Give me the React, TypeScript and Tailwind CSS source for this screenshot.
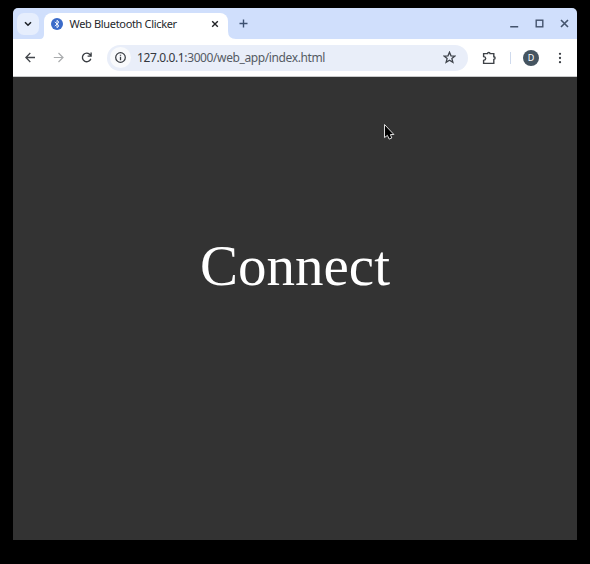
import React from "react";

function TabStrip() {
  return (
    <div className="flex h-[31px] items-start bg-[#d0dffc]">
      <button className="ml-[4px] mt-[5px] flex h-[22px] w-[22px] items-center justify-center rounded-[7px] bg-[#e6eefd]">
        <svg width="8" height="6" viewBox="0 0 8 6" fill="none" stroke="#1f2329" strokeWidth="1.6">
          <path d="M1 1.2 4 4.2 7 1.2" />
        </svg>
      </button>
      <svg className="ml-px mt-[23px] shrink-0" width="4" height="8" viewBox="0 0 4 8" fill="#fff">
        <path d="M0 8Q4 8 4 3V8Z" />
      </svg>
      <div className="mt-[5px] flex h-[26px] w-[184px] items-center rounded-t-[8px] bg-white pb-[5px] pl-[7px] pr-[9px]">
        <svg className="shrink-0" width="12" height="12" viewBox="0 0 12 12" fill="none">
          <circle cx="6" cy="6" r="6" fill="#3b6bc9" />
          <path d="M3.8 3.9 8 7.8 6 9.7V2.3L8 4.2 3.8 8.1" stroke="#fff" strokeWidth="0.9" />
        </svg>
        <span className="ml-[6.5px] whitespace-nowrap text-[11px] leading-[20px] tracking-[-0.33px] text-[#25282c]">
          Web Bluetooth Clicker
        </span>
        <svg className="ml-auto shrink-0" width="8" height="8" viewBox="0 0 8 8" stroke="#202226" strokeWidth="1.4">
          <path d="M1.2 1.2 6.8 6.8M6.8 1.2 1.2 6.8" />
        </svg>
      </div>
      <svg className="mt-[23px] shrink-0" width="8" height="8" viewBox="0 0 8 8" fill="#fff">
        <path d="M0 0Q0 8 8 8H0Z" />
      </svg>
      <svg className="ml-[3px] mt-[11px] shrink-0" width="9" height="9" viewBox="0 0 9 9" stroke="#3c5070" strokeWidth="1.4">
        <path d="M4.5 .5V8.5M.5 4.5H8.5" />
      </svg>
      <div className="ml-auto mr-[8px] mt-[11px] flex h-[9px] items-center gap-[16px]">
        <svg width="9" height="9" viewBox="0 0 9 9" stroke="#43536c" strokeWidth="1.5">
          <path d="M.2 7.8H8.2" />
        </svg>
        <svg width="9" height="9" viewBox="0 0 9 9" fill="none" stroke="#43536c" strokeWidth="1.4">
          <rect x="1.2" y="1.2" width="6.6" height="6.6" />
        </svg>
        <svg width="9" height="9" viewBox="0 0 9 9" stroke="#43536c" strokeWidth="1.6">
          <path d="M1 1 8 8M8 1 1 8" />
        </svg>
      </div>
    </div>
  );
}

function Toolbar() {
  return (
    <div className="flex h-[38px] items-center border-b border-[#c9cacb] bg-white pl-[12px]">
      <svg className="shrink-0" width="11" height="11" viewBox="0 0 11 11" fill="none" stroke="#42464b" strokeWidth="1.3">
        <path d="M10 5.5H1.2M5.3 1 .8 5.5 5.3 10" />
      </svg>
      <svg className="ml-[17px] shrink-0" width="11" height="11" viewBox="0 0 11 11" fill="none" stroke="#aaacae" strokeWidth="1.2">
        <path d="M.8 5.5H9.8M5.5 1 10 5.5 5.5 10" />
      </svg>
      <svg className="ml-[17px] shrink-0" width="11" height="11" viewBox="0 0 11 11" fill="none" stroke="#3a3e43" strokeWidth="1.35">
        <path d="M9.8 6.8A4.3 4.3 0 1 1 9.2 2.9L10.1 4M10.1 .5V4.1H6.6" />
      </svg>
      <div className="ml-[15px] flex h-[26px] w-[361px] items-center rounded-full bg-[#e9eef9] pl-[3px] pr-[12px]">
        <div className="flex h-[21px] w-[21px] shrink-0 items-center justify-center rounded-full bg-[#f9fafc]">
          <svg width="11" height="11" viewBox="0 0 11 11" fill="none" stroke="#393d42" strokeWidth="1.25">
            <circle cx="5.5" cy="5.5" r="4.8" />
            <path d="M5.5 4.8V8.2M5.5 2.7V3.8" strokeWidth="1.3" />
          </svg>
        </div>
        <span className="ml-[6px] whitespace-nowrap text-[12px] leading-[20px] tracking-[-0.39px] text-[#555b64]">
          <span className="text-[#34383e]">127.0.0.1</span>:3000/web_app/index.html
        </span>
        <svg className="ml-auto shrink-0" width="13" height="13" viewBox="0 0 13 13" fill="none" stroke="#3f444c" strokeWidth="1.3">
          <path d="M6.5 1.2 8 4.8 11.9 5.1 8.9 7.6 9.9 11.4 6.5 9.3 3.1 11.4 4.1 7.6 1.1 5.1 5 4.8Z" />
        </svg>
      </div>
      <svg className="ml-[14px] shrink-0" width="14" height="14" viewBox="0 0 14 14" fill="none" stroke="#3e4247" strokeWidth="1.4">
        <path d="M1.6 2.6H5.6A1.2 1.2 0 0 1 8 2.6H11.8V5.8A1.2 1.2 0 0 1 11.8 8.4V12.4H1.6V9.4C4.4 9 4.4 5.9 1.6 5.6Z" />
      </svg>
      <div className="ml-[14px] h-[12px] w-px bg-[#cfdaed]" />
      <div className="ml-[12px] flex h-[16px] w-[16px] items-center justify-center rounded-full bg-[#455460] text-[9px] leading-none text-white">
        D
      </div>
      <svg className="ml-[19px] shrink-0" width="4" height="12" viewBox="0 0 4 12" fill="#3e4247">
        <circle cx="2" cy="1.8" r="1.15" />
        <circle cx="2" cy="6" r="1.15" />
        <circle cx="2" cy="10.2" r="1.15" />
      </svg>
    </div>
  );
}

export default function App() {
  return (
    <div className="h-[564px] w-[590px] overflow-hidden bg-black pl-[13px] pt-[8px] font-['Noto_Sans',sans-serif]">
      <div className="relative flex h-[532px] w-[564px] flex-col overflow-hidden rounded-t-[5px] bg-[#333333]">
        <TabStrip />
        <Toolbar />
        <main className="flex justify-center pt-[156px] font-['Liberation_Serif',serif] text-[57px] leading-[65px] text-white">
          Connect
        </main>
        <svg className="absolute left-[370px] top-[115px]" width="12" height="18" viewBox="0 0 12 18">
          <path
            d="M1.5 1.5V14.6L4.4 12.4 6.2 16.1 8.8 15 7.4 11.5H10.9Z"
            fill="#000"
            stroke="#ddd"
            strokeWidth="1"
          />
        </svg>
      </div>
    </div>
  );
}
